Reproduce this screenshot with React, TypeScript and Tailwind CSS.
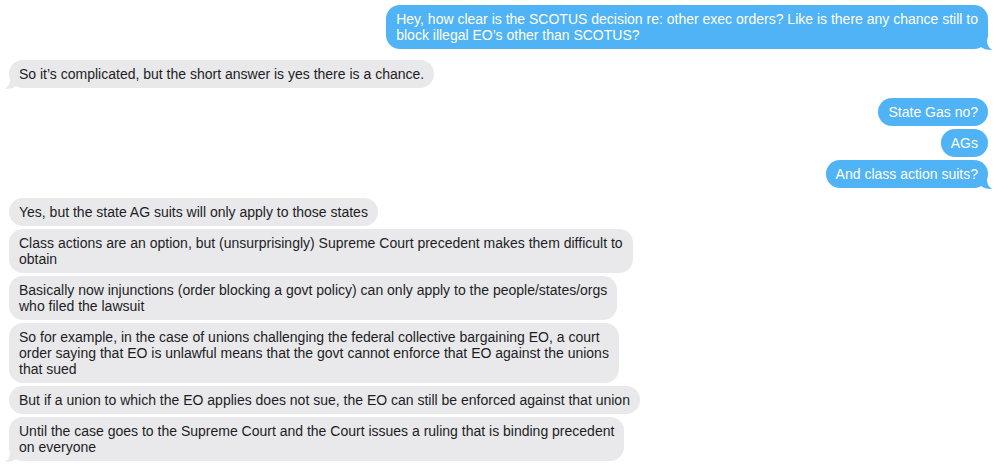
import React from "react";

type Msg = { me: boolean; lines: string[]; tail?: boolean; gapTop: string };

const msgs: Msg[] = [
  {
    me: true,
    lines: [
      "Hey, how clear is the SCOTUS decision re: other exec orders? Like is there any chance still to",
      "block illegal EO\u2019s other than SCOTUS?",
    ],
    tail: true,
    gapTop: "mt-[5px]",
  },
  {
    me: false,
    lines: ["So it\u2019s complicated, but the short answer is yes there is a chance."],
    tail: true,
    gapTop: "mt-[11px]",
  },
  { me: true, lines: ["State Gas no?"], gapTop: "mt-[10px]" },
  { me: true, lines: ["AGs"], gapTop: "mt-[3px]" },
  { me: true, lines: ["And class action suits?"], tail: true, gapTop: "mt-[3px]" },
  { me: false, lines: ["Yes, but the state AG suits will only apply to those states"], gapTop: "mt-[10px]" },
  {
    me: false,
    lines: [
      "Class actions are an option, but (unsurprisingly) Supreme Court precedent makes them difficult to",
      "obtain",
    ],
    gapTop: "mt-[3px]",
  },
  {
    me: false,
    lines: [
      "Basically now injunctions (order blocking a govt policy) can only apply to the people/states/orgs",
      "who filed the lawsuit",
    ],
    gapTop: "mt-[3px]",
  },
  {
    me: false,
    lines: [
      "So for example, in the case of unions challenging the federal collective bargaining EO, a court",
      "order saying that EO is unlawful means that the govt cannot enforce that EO against the unions",
      "that sued",
    ],
    gapTop: "mt-[3px]",
  },
  {
    me: false,
    lines: ["But if a union to which the EO applies does not sue, the EO can still be enforced against that union"],
    gapTop: "mt-[3px]",
  },
  {
    me: false,
    lines: [
      "Until the case goes to the Supreme Court and the Court issues a ruling that is binding precedent",
      "on everyone",
    ],
    tail: true,
    gapTop: "mt-[3px]",
  },
];

function Tail({ me }: { me: boolean }) {
  if (me) {
    return (
      <svg
        className="absolute right-[-5px] bottom-[-1px]"
        width="14"
        height="16"
        viewBox="0 0 14 16"
      >
        <path d="M0 0 L8 0 L8 7 C8 11 10 14 13 16 C8 16 4 15 1 12 Z" fill="#4fb3f6" />
      </svg>
    );
  }
  return (
    <svg
      className="absolute left-[-5px] bottom-[-1px]"
      width="14"
      height="16"
      viewBox="0 0 14 16"
    >
      <path d="M14 0 L6 0 L6 7 C6 11 4 14 1 16 C6 16 10 15 13 12 Z" fill="#e9e9eb" />
    </svg>
  );
}

export default function App() {
  return (
    <div
      className="w-[1000px] h-[466px] bg-white overflow-hidden flex flex-col pl-[9px] pr-[12px]"
      style={{ fontFamily: '"Liberation Sans", Arial, sans-serif' }}
    >
      {msgs.map((m, i) => (
        <div key={i} className={`flex ${m.me ? "justify-end" : "justify-start"} ${m.gapTop}`}>
          <div
            className={`relative rounded-[14px] px-[10px] py-[6px] text-[14px] leading-[16px] whitespace-nowrap ${
              m.me ? "bg-[#4fb3f6] text-white" : "bg-[#e9e9eb] text-[#1d1d1f]"
            }`}
          >
            {m.tail && <Tail me={m.me} />}
            <div className="relative">
              {m.lines.map((l, j) => (
                <div key={j}>{l}</div>
              ))}
            </div>
          </div>
        </div>
      ))}
    </div>
  );
}
